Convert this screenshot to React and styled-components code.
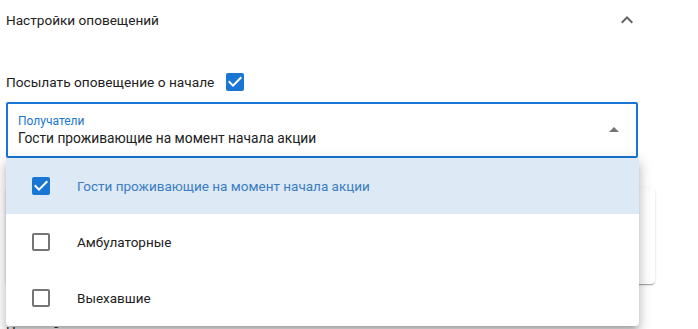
import React from "react";
import styled, { createGlobalStyle } from "styled-components";

const GlobalStyle = createGlobalStyle`
	body {
		margin: 0;
		background: #fff;
		font-family: Roboto, "Liberation Sans", Arial, sans-serif;
		color: #212121;
	}
`;

const options = [
	{ label: "Гости проживающие на момент начала акции", checked: true },
	{ label: "Амбулаторные", checked: false },
	{ label: "Выехавшие", checked: false },
];

const CheckIcon = () => (
	<svg width="18" height="18" viewBox="3 3 18 18">
		<path d="M10 17l-5-5 1.41-1.41L10 14.17l7.59-7.59L19 8l-9 9z" fill="#fff" />
	</svg>
);

const ChevronUp = () => (
	<svg width="24" height="24" viewBox="0 0 24 24">
		<path d="M12 8l-6 6 1.41 1.41L12 10.83l4.59 4.58L18 14z" fill="#616161" />
	</svg>
);

const ArrowUp = () => (
	<svg width="24" height="24" viewBox="0 0 24 24">
		<path d="M7 14l5-5 5 5z" fill="#757575" />
	</svg>
);

function Box({ checked }) {
	return <CheckBox checked={checked}>{checked && <CheckIcon />}</CheckBox>;
}

export default function App() {
	return (
		<>
			<GlobalStyle />
			<Page>
				<Header>
					<Title>Настройки оповещений</Title>
					<IconButton>
						<ChevronUp />
					</IconButton>
				</Header>
				<CheckRow>
					<span>Посылать оповещение о начале</span>
					<Box checked />
				</CheckRow>
				<Field>
					<FieldText>
						<Label>Получатели</Label>
						<Value>Гости проживающие на момент начала акции</Value>
					</FieldText>
					<ArrowUp />
				</Field>
				<Below>
					<Menu>
						{options.map((o) => (
							<Item key={o.label} selected={o.checked}>
								<Box checked={o.checked} />
								<span>{o.label}</span>
							</Item>
						))}
					</Menu>
					<Card />
					<Header offset={27}>
						<Title>Настройки периода</Title>
					</Header>
				</Below>
			</Page>
		</>
	);
}

const Page = styled.div`
	width: 632px;
	padding: 0 6px;
`;

const Header = styled.div`
	display: flex;
	align-items: center;
	justify-content: space-between;
	height: 40px;
	margin-top: ${(p) => p.offset || 0}px;
`;

const Title = styled.div`
	font-size: 13.6px;
	line-height: 20px;
`;

const IconButton = styled.div`
	display: flex;
	width: 24px;
	height: 24px;
	margin-right: -1px;
`;

const CheckRow = styled.label`
	display: flex;
	align-items: center;
	gap: 12px;
	height: 20px;
	margin-top: 32px;
	font-size: 13.7px;
`;

const CheckBox = styled.span`
	display: inline-flex;
	align-items: center;
	justify-content: center;
	box-sizing: border-box;
	width: 18px;
	height: 18px;
	border-radius: 2px;
	flex-shrink: 0;
	background: ${(p) => (p.checked ? "#1976d2" : "transparent")};
	border: ${(p) => (p.checked ? "none" : "2px solid #757575")};
`;

const Field = styled.div`
	display: flex;
	align-items: center;
	box-sizing: border-box;
	height: 56px;
	margin-top: 10px;
	padding: 0 10px;
	border: 2px solid #1976d2;
	border-radius: 2px;
`;

const FieldText = styled.div`
	flex: 1;
	display: flex;
	flex-direction: column;
	padding-top: 2px;
`;

const Label = styled.div`
	font-size: 12px;
	line-height: 14px;
	color: #1976d2;
`;

const Value = styled.div`
	font-size: 13.75px;
	line-height: 20px;
`;

const Below = styled.div`
	position: relative;
	display: flow-root;
`;

const Menu = styled.div`
	position: absolute;
	top: 0;
	left: 0;
	width: 633px;
	background: #fff;
	border-radius: 0 0 4px 4px;
	box-shadow: 0px 5px 5px -3px rgba(0, 0, 0, 0.2), 0px 8px 10px 1px rgba(0, 0, 0, 0.14),
		0px 3px 14px 2px rgba(0, 0, 0, 0.12);
	z-index: 2;
`;

const Item = styled.div`
	display: flex;
	align-items: center;
	gap: 27px;
	height: 56px;
	padding-left: 26px;
	font-size: 13.5px;
	color: ${(p) => (p.selected ? "#3a7dc2" : "#212121")};
	background: ${(p) => (p.selected ? "#dde9f5" : "transparent")};
`;

const Card = styled.div`
	width: 649px;
	height: 96px;
	margin-top: 30px;
	border-radius: 4px;
	background: #fff;
	box-shadow: 0px 2px 1px -1px rgba(0, 0, 0, 0.2), 0px 1px 1px 0px rgba(0, 0, 0, 0.14),
		0px 1px 3px 0px rgba(0, 0, 0, 0.12);
`;
